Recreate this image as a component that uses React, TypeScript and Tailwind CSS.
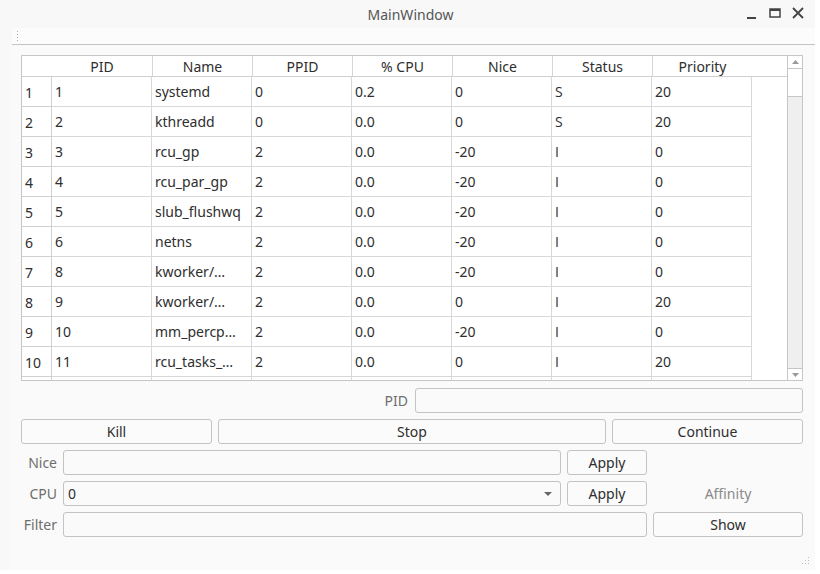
import React from "react";

const rows = [
  ["1", "1", "systemd", "0", "0.2", "0", "S", "20"],
  ["2", "2", "kthreadd", "0", "0.0", "0", "S", "20"],
  ["3", "3", "rcu_gp", "2", "0.0", "-20", "I", "0"],
  ["4", "4", "rcu_par_gp", "2", "0.0", "-20", "I", "0"],
  ["5", "5", "slub_flushwq", "2", "0.0", "-20", "I", "0"],
  ["6", "6", "netns", "2", "0.0", "-20", "I", "0"],
  ["7", "8", "kworker/…", "2", "0.0", "-20", "I", "0"],
  ["8", "9", "kworker/…", "2", "0.0", "0", "I", "20"],
  ["9", "10", "mm_percp…", "2", "0.0", "-20", "I", "0"],
  ["10", "11", "rcu_tasks_…", "2", "0.0", "0", "I", "20"],
  ["", "", "", "", "", "", "", ""],
];

const headers = ["PID", "Name", "PPID", "% CPU", "Nice", "Status", "Priority"];

function Btn({ children, className = "" }: { children: React.ReactNode; className?: string }) {
  return (
    <div
      className={
        "h-[25px] flex items-center justify-center rounded-[3px] border border-[#c3c3c3] bg-[#fbfbfb] text-[14px] text-[#2e2e2e] " +
        className
      }
    >
      {children}
    </div>
  );
}

function Input({ className = "", children }: { className?: string; children?: React.ReactNode }) {
  return (
    <div
      className={
        "h-[25px] rounded-[3px] border border-[#c3c3c3] bg-[#fafafa] flex items-center " + className
      }
    >
      {children}
    </div>
  );
}

export default function App() {
  return (
    <div
      className="w-[820px] h-[574px] bg-white overflow-hidden relative"
      style={{ fontFamily: '"Noto Sans", "DejaVu Sans", sans-serif' }}
    >
      <div className="w-[815px] flex flex-col bg-[#f8f8f8]">
        {/* title bar */}
        <div className="h-[28px] relative flex items-center justify-center">
          <span className="text-[14px] text-[#555] ml-[6px]">MainWindow</span>
          <div className="absolute right-[10px] top-[6px] flex items-center gap-[9px] text-[#444]">
            <svg width="14" height="14" viewBox="0 0 14 14">
              <rect x="2" y="11" width="9" height="2" fill="#444" />
            </svg>
            <svg width="14" height="14" viewBox="0 0 14 14">
              <rect x="2" y="3" width="10" height="8" fill="none" stroke="#444" strokeWidth="1.5" />
              <rect x="2" y="3" width="10" height="2" fill="#444" />
            </svg>
            <svg width="14" height="14" viewBox="0 0 14 14">
              <path d="M2 2 L12 12 M12 2 L2 12" stroke="#444" strokeWidth="1.8" />
            </svg>
          </div>
        </div>
        {/* toolbar */}
        <div className="ml-[12px] h-[17px] bg-[#fcfcfc] border-b border-[#c4c4c4] flex items-start pt-[3px] pl-[5px]">
          <div className="flex flex-col gap-[2px]">
            {[0, 1, 2, 3].map((i) => (
              <div key={i} className="w-[1px] h-[1px] bg-[#aaa]" />
            ))}
          </div>
        </div>
        {/* content */}
        <div className="ml-[10px] h-[525px] bg-[#fafafa] pl-[11px] pr-[12px] pt-[10px] relative">
          {/* table */}
          <div className="w-[782px] h-[326px] border border-[#c6c6c6] bg-white flex overflow-hidden">
            <div className="flex-1 flex flex-col overflow-hidden">
              <div className="h-[21px] flex border-b border-[#d0d0d0] bg-white shrink-0">
                <div className="w-[30px] shrink-0" />
                {headers.map((h, i) => (
                  <div
                    key={h}
                    className={
                      "w-[100px] shrink-0 flex items-center justify-center text-[14px] text-[#2e2e2e] " +
                      (i > 0 ? "border-l border-[#d6d6d6]" : "")
                    }
                  >
                    {h}
                  </div>
                ))}
              </div>
              {rows.map((r, ri) => (
                <div key={ri} className="h-[30px] flex shrink-0">
                  <div className="w-[30px] shrink-0 border-b border-r border-[#d0d0d0] flex items-center pl-[3px] pt-[2px] text-[14px] text-[#2e2e2e]">
                    {r[0]}
                  </div>
                  {r.slice(1).map((c, i) => (
                    <div
                      key={i}
                      className="w-[100px] shrink-0 border-b border-r border-[#d8d8d8] flex items-center pl-[3px] text-[14px] text-[#2e2e2e] whitespace-nowrap overflow-hidden"
                      style={i === 5 ? { fontFamily: '"Open Sans", sans-serif' } : undefined}
                    >
                      {c}
                    </div>
                  ))}
                </div>
              ))}
            </div>
            {/* scrollbar */}
            <div className="w-[15px] shrink-0 border-l border-[#c6c6c6] flex flex-col bg-[#efefef]">
              <div className="h-[13px] bg-white border-b border-[#c6c6c6] flex items-center justify-center">
                <svg width="7" height="4" viewBox="0 0 7 4">
                  <path d="M0 4 L3.5 0 L7 4 Z" fill="#999" />
                </svg>
              </div>
              <div className="h-[28px] bg-white border-b border-[#c6c6c6]" />
              <div className="flex-1" />
              <div className="h-[12px] bg-white border-t border-[#c6c6c6] flex items-center justify-center">
                <svg width="7" height="4" viewBox="0 0 7 4">
                  <path d="M0 0 L3.5 4 L7 0 Z" fill="#999" />
                </svg>
              </div>
            </div>
          </div>

          {/* PID row */}
          <div className="mt-[7px] flex justify-end items-center gap-[7px]">
            <span className="text-[14px] text-[#6e6e6e]">PID</span>
            <Input className="w-[388px]" />
          </div>

          {/* buttons */}
          <div className="mt-[6px] flex gap-[6px]">
            <Btn className="w-[191px]">Kill</Btn>
            <Btn className="w-[388px]">Stop</Btn>
            <Btn className="w-[191px]">Continue</Btn>
          </div>

          {/* form grid */}
          <div className="mt-[6px] grid grid-cols-[36px_498px_80px_150px] gap-x-[6px] gap-y-[6px] items-center">
            <span className="text-[14px] text-[#6e6e6e] text-right">Nice</span>
            <Input />
            <Btn>Apply</Btn>
            <div />

            <span className="text-[14px] text-[#6e6e6e] text-right">CPU</span>
            <Input className="pl-[4px] pr-[8px] justify-between">
              <span className="text-[14px] text-[#2e2e2e]">0</span>
              <svg width="8" height="4" viewBox="0 0 8 4">
                <path d="M0 0 L4 4 L8 0 Z" fill="#666" />
              </svg>
            </Input>
            <Btn>Apply</Btn>
            <span className="text-[14px] text-[#8a8a8a] text-center">Affinity</span>

            <span className="text-[14px] text-[#6e6e6e] text-right">Filter</span>
            <Input className="col-span-2" />
            <Btn>Show</Btn>
          </div>

          {/* size grip */}
          <div className="absolute right-[5px] bottom-[5px]">
            <svg width="9" height="9" viewBox="0 0 9 9">
              <rect x="7" y="1" width="1" height="1" fill="#bbb" />
              <rect x="7" y="4" width="1" height="1" fill="#bbb" />
              <rect x="7" y="7" width="1" height="1" fill="#bbb" />
              <rect x="4" y="4" width="1" height="1" fill="#bbb" />
              <rect x="4" y="7" width="1" height="1" fill="#bbb" />
              <rect x="1" y="7" width="1" height="1" fill="#bbb" />
            </svg>
          </div>
        </div>
      </div>
    </div>
  );
}
